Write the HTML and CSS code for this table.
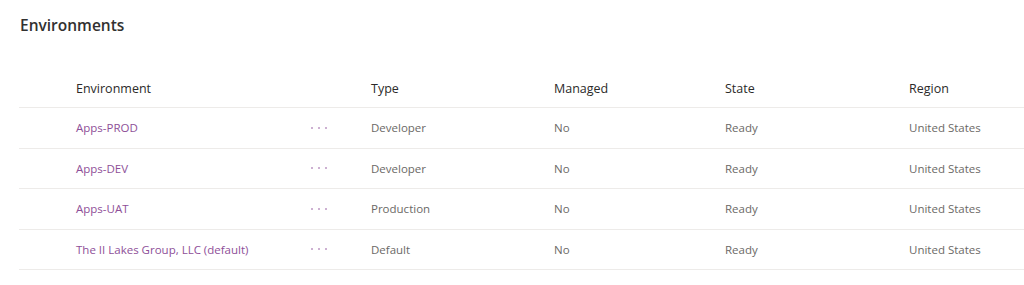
FILE: index.html
```html
<!DOCTYPE html>
<html lang="en">
<head>
  <meta charset="UTF-8">
  <title>Environments</title>
  <link rel="stylesheet" href="styles.css">
</head>
<body>

<div class="page">
  <h1>Environments</h1>

  <div class="env-list">
    <div class="row head">
      <div></div>
      <div>Environment</div>
      <div></div>
      <div>Type</div>
      <div>Managed</div>
      <div>State</div>
      <div>Region</div>
    </div>
    <div class="row">
      <div></div>
      <div><a href="#">Apps-PROD</a></div>
      <div class="more"><svg width="18" height="4" viewBox="0 0 18 4"><circle cx="2" cy="2" r="0.8"/><circle cx="9" cy="2" r="0.8"/><circle cx="16" cy="2" r="0.8"/></svg></div>
      <div>Developer</div>
      <div>No</div>
      <div>Ready</div>
      <div>United States</div>
    </div>
    <div class="row">
      <div></div>
      <div><a href="#">Apps-DEV</a></div>
      <div class="more"><svg width="18" height="4" viewBox="0 0 18 4"><circle cx="2" cy="2" r="0.8"/><circle cx="9" cy="2" r="0.8"/><circle cx="16" cy="2" r="0.8"/></svg></div>
      <div>Developer</div>
      <div>No</div>
      <div>Ready</div>
      <div>United States</div>
    </div>
    <div class="row">
      <div></div>
      <div><a href="#">Apps-UAT</a></div>
      <div class="more"><svg width="18" height="4" viewBox="0 0 18 4"><circle cx="2" cy="2" r="0.8"/><circle cx="9" cy="2" r="0.8"/><circle cx="16" cy="2" r="0.8"/></svg></div>
      <div>Production</div>
      <div>No</div>
      <div>Ready</div>
      <div>United States</div>
    </div>
    <div class="row">
      <div></div>
      <div><a href="#">The II Lakes Group, LLC (default)</a></div>
      <div class="more"><svg width="18" height="4" viewBox="0 0 18 4"><circle cx="2" cy="2" r="0.8"/><circle cx="9" cy="2" r="0.8"/><circle cx="16" cy="2" r="0.8"/></svg></div>
      <div>Default</div>
      <div>No</div>
      <div>Ready</div>
      <div>United States</div>
    </div>
  </div>
</div>

</body>
</html>
```

FILE: styles.css
```css
body {
  font-family: 'Open Sans', 'Noto Sans', sans-serif;
  margin: 0;
  padding: 0;
  background-color: #fff;
  color: #6b6966;
}
.page {
  padding: 13px 0 0 19px;
}
h1 {
  margin: 0 0 0 1px;
  font-size: 15.5px;
  font-weight: 600;
  line-height: 24px;
  color: #323130;
}
.env-list {
  margin-top: 29px;
}
.row {
  display: grid;
  grid-template-columns: 57px 232px 63px 183px 171px 184px 1fr;
  align-items: center;
  box-sizing: border-box;
  height: 40.5px;
  border-bottom: 1px solid #edebe9;
  font-size: 11.5px;
}
.row.head {
  height: 42px;
  padding-top: 3px;
  font-size: 12.5px;
  font-weight: 500;
  color: #2b2a29;
}
.row a {
  color: #8e4f98;
  text-decoration: none;
}
.more {
  display: flex;
  align-items: center;
  padding-left: 2px;
}
.more svg {
  fill: #8e4f98;
}
```
